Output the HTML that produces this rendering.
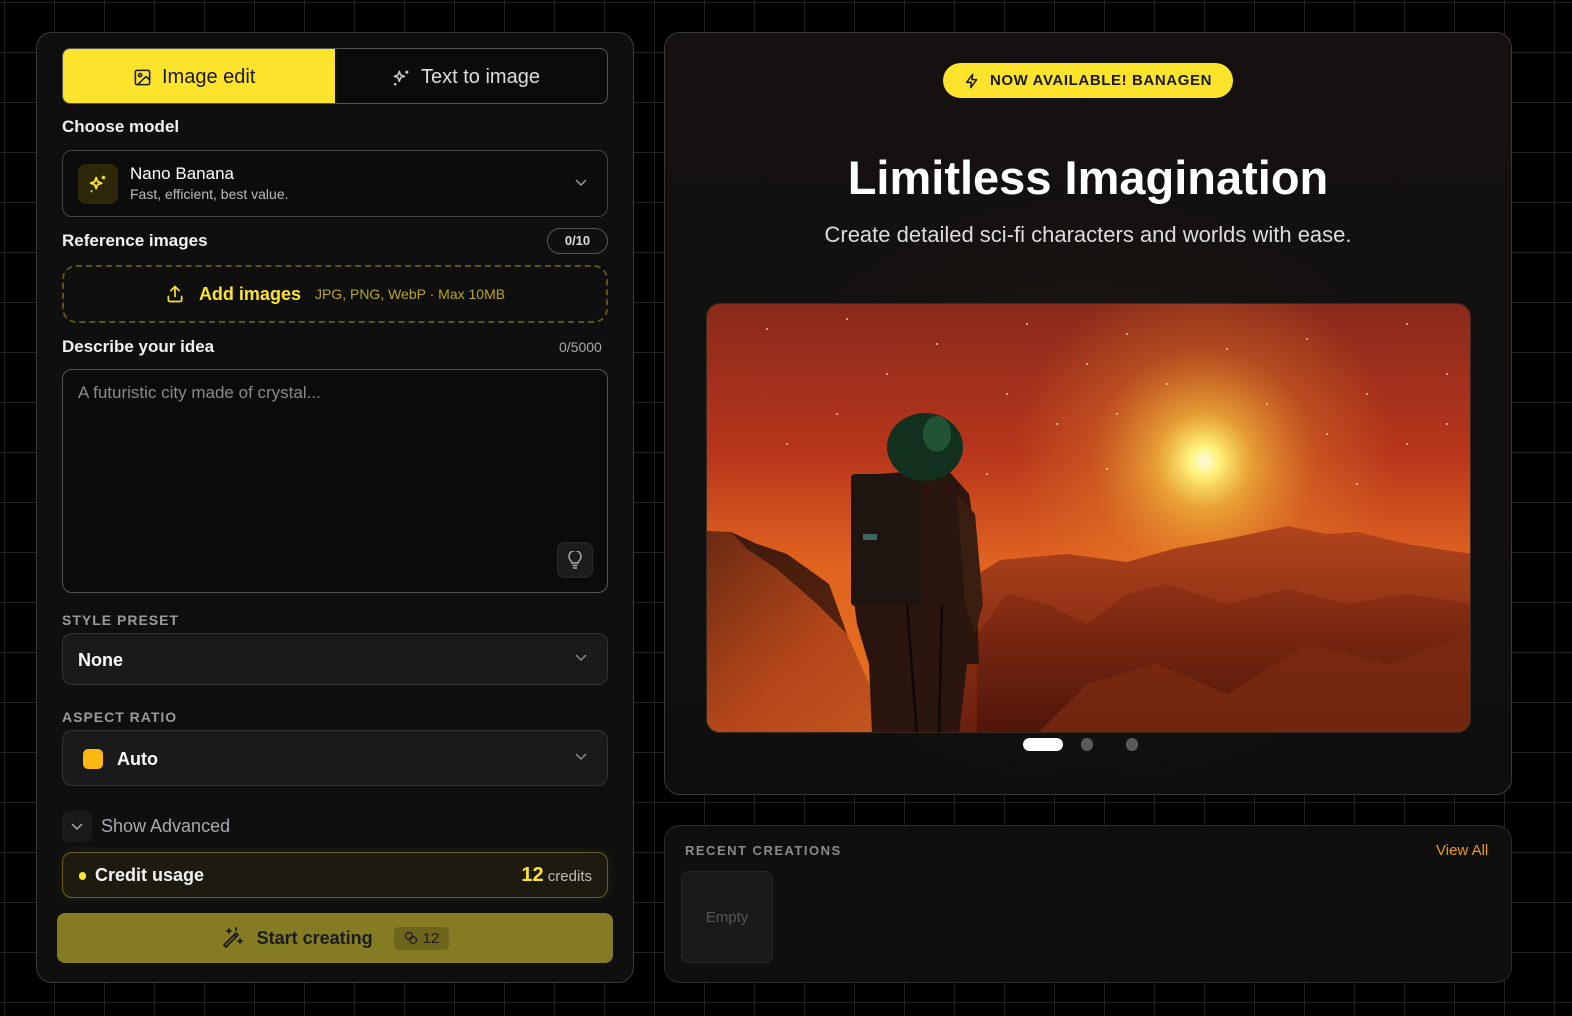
<!DOCTYPE html>
<html><head><meta charset="utf-8">
<style>
*{box-sizing:border-box;margin:0;padding:0}
html,body{width:1572px;height:1016px;overflow:hidden}
body{background-color:#000;background-image:linear-gradient(to right,#222 1px,transparent 1px),linear-gradient(to bottom,#222 1px,transparent 1px);background-size:50px 50px;background-position:4px 2px;font-family:"Liberation Sans",sans-serif;color:#fff;position:relative}
.a{position:absolute}
.panel{background:#0f0f0f;border:1px solid #3a3a3a;border-radius:16px}
.lbl{font-size:17px;font-weight:bold;color:#f2f2f2}
.cap{font-size:14px;font-weight:bold;color:#9a9a9a;letter-spacing:1px}
.sel{background:#1a1a1a;border:1px solid #333;border-radius:10px}
.chev{position:absolute;right:20px;top:50%;margin-top:-5px}
</style></head><body>

<div class="a panel" style="left:36px;top:32px;width:598px;height:951px"></div>
<div class="a" style="left:62px;top:48px;width:546px;height:56px;border:1px solid #555;border-radius:8px;background:#0b0b0b;overflow:hidden">
  <div class="a" style="left:0;top:0;width:272px;height:56px;background:#fde42c"></div>
  <div class="a" style="left:70px;top:17px;display:flex;align-items:center;gap:10px;color:#1a1a1a;font-size:20px">
    <svg width="19" height="19" viewBox="0 0 24 24" fill="none" stroke="#1a1a1a" stroke-width="2" stroke-linecap="round" stroke-linejoin="round"><rect x="3" y="3" width="18" height="18" rx="2"/><circle cx="9" cy="9" r="2"/><path d="M21 15l-3.1-3.1a2 2 0 0 0-2.8 0L6 21"/></svg>
    <span>Image edit</span></div>
  <div class="a" style="left:328px;top:17px;display:flex;align-items:center;gap:10px;color:#ddd;font-size:20px">
    <svg width="20" height="20" viewBox="0 0 24 24" fill="none" stroke="#ccc" stroke-width="1.8" stroke-linejoin="round"><path d="M10 4l1.6 4.4L16 10l-4.4 1.6L10 16l-1.6-4.4L4 10l4.4-1.6z"/><path d="M19 3v4M17 5h4M5 18v3M3.5 19.5h3"/></svg>
    <span>Text to image</span></div>
</div>

<div class="a lbl" style="left:62px;top:117px">Choose model</div>
<div class="a" style="left:62px;top:150px;width:546px;height:67px;border:1px solid #444;border-radius:10px;background:#0c0c0c">
  <div class="a" style="left:15px;top:13px;width:40px;height:40px;border-radius:8px;background:#2b2708;display:flex;align-items:center;justify-content:center">
    <svg width="22" height="22" viewBox="0 0 24 24" fill="none" stroke="#fde42c" stroke-width="2" stroke-linejoin="round"><path d="M10 5l1.6 4.4L16 11l-4.4 1.6L10 17l-1.6-4.4L4 11l4.4-1.6z"/><path d="M18 3v4M16 5h4M5 19v2"/></svg></div>
  <div class="a" style="left:67px;top:13px;font-size:17px;color:#fff">Nano Banana</div>
  <div class="a" style="left:67px;top:35px;font-size:14px;color:#bbb">Fast, efficient, best value.</div>
  <svg class="chev" width="12" height="8" viewBox="0 0 12 8"><path d="M1 1l5 5 5-5" fill="none" stroke="#999" stroke-width="1.5"/></svg>
</div>

<div class="a lbl" style="left:62px;top:231px">Reference images</div>
<div class="a" style="left:547px;top:228px;width:61px;height:26px;border:1px solid #555;border-radius:13px;font-size:13px;font-weight:bold;color:#ddd;text-align:center;line-height:24px">0/10</div>
<div class="a" style="left:62px;top:265px;width:546px;height:58px;border:2px dashed #5e5416;border-radius:14px;display:flex;align-items:center;justify-content:center;gap:0">
  <svg width="20" height="20" viewBox="0 0 24 24" fill="none" stroke="#fde42c" stroke-width="2" stroke-linecap="round" stroke-linejoin="round"><path d="M12 15V3M7 8l5-5 5 5M4 15v4a2 2 0 0 0 2 2h12a2 2 0 0 0 2-2v-4"/></svg>
  <span style="color:#fde42c;font-size:18px;font-weight:bold;margin-left:14px">Add images</span>
  <span style="color:#b9a51f;font-size:14px;margin-left:14px">JPG, PNG, WebP · Max 10MB</span>
</div>

<div class="a lbl" style="left:62px;top:337px">Describe your idea</div>
<div class="a" style="left:559px;top:339px;font-size:14px;color:#aaa">0/5000</div>
<div class="a" style="left:62px;top:369px;width:546px;height:224px;border:1px solid #555;border-radius:10px;background:#0b0b0b">
  <div class="a" style="left:15px;top:13px;font-size:17px;color:#8a8a8a">A futuristic city made of crystal...</div>
  <div class="a" style="left:494px;top:172px;width:36px;height:36px;border-radius:8px;background:#1c1c1c;border:1px solid #2a2a2a;display:flex;align-items:center;justify-content:center">
    <svg width="16" height="18" viewBox="0 0 16 18" fill="none" stroke="#aaa" stroke-width="1.5"><path d="M5 12c0-2-3-3-3-6.5a6 6 0 0 1 12 0C14 9 11 10 11 12z"/><path d="M5.5 14.5h5M6 17h4"/></svg></div>
</div>

<div class="a cap" style="left:62px;top:612px">STYLE PRESET</div>
<div class="a sel" style="left:62px;top:633px;width:546px;height:52px">
  <div class="a" style="left:15px;top:16px;font-size:18px;font-weight:bold;color:#fff">None</div>
  <svg class="chev" width="12" height="8" viewBox="0 0 12 8"><path d="M1 1l5 5 5-5" fill="none" stroke="#888" stroke-width="1.5"/></svg>
</div>
<div class="a cap" style="left:62px;top:709px">ASPECT RATIO</div>
<div class="a sel" style="left:62px;top:730px;width:546px;height:56px">
  <div class="a" style="left:20px;top:18px;width:20px;height:20px;border-radius:5px;background:#fbb812"></div>
  <div class="a" style="left:54px;top:18px;font-size:18px;font-weight:bold;color:#fff">Auto</div>
  <svg class="chev" width="12" height="8" viewBox="0 0 12 8"><path d="M1 1l5 5 5-5" fill="none" stroke="#888" stroke-width="1.5"/></svg>
</div>

<div class="a" style="left:62px;top:811px;width:30px;height:31px;border-radius:5px;background:#1a1a1a;display:flex;align-items:center;justify-content:center">
  <svg width="12" height="8" viewBox="0 0 12 8"><path d="M1 1l5 5 5-5" fill="none" stroke="#aaa" stroke-width="1.5"/></svg></div>
<div class="a" style="left:101px;top:816px;font-size:18px;color:#a9a9b0">Show Advanced</div>

<div class="a" style="left:62px;top:852px;width:546px;height:46px;border:1px solid #6b5f15;border-radius:10px;background:#1d1b0f;box-shadow:0 0 12px rgba(253,228,44,.08)">
  <div class="a" style="left:16px;top:19px;width:7px;height:8px;border-radius:4px;background:#fde42c"></div>
  <div class="a" style="left:32px;top:12px;font-size:18px;font-weight:bold;color:#f2f2f2">Credit usage</div>
  <div class="a" style="right:15px;top:11px;font-size:15px;color:#bbb"><b style="color:#fde42c;font-size:20px">12</b> credits</div>
</div>

<div class="a" style="left:57px;top:913px;width:556px;height:50px;border-radius:8px;background:#857b23;display:flex;align-items:center;justify-content:center">
  <svg width="24" height="24" viewBox="0 0 24 24" fill="none" stroke="#1a1a1a" stroke-width="1.8" stroke-linecap="round" stroke-linejoin="round"><path d="M3 21l12-12 2 2L5 23z" transform="translate(0,-2)"/><path d="M13 11l2 2" transform="translate(0,-2)"/><path d="M8 3v4M6 5h4M19 13v4M17 15h4M15 2v2"/></svg>
  <span style="margin-left:12px;font-size:18px;font-weight:bold;color:#1c1c1c">Start creating</span>
  <span style="margin-left:21px;background:#6d651c;border-radius:5px;padding:3px 10px;font-size:15px;color:#1f1f1f;display:flex;align-items:center;gap:5px">
    <svg width="14" height="14" viewBox="0 0 14 14" fill="none" stroke="#1f1f1f" stroke-width="1.3"><circle cx="5" cy="5" r="3.5"/><circle cx="9" cy="9" r="3.5"/></svg>12</span>
</div>

<div class="a" style="left:664px;top:32px;width:848px;height:763px;border:1px solid #3a3a3a;border-radius:16px;background:radial-gradient(ellipse 60% 55% at 50% 60%,#221a0e 0%,rgba(20,16,12,0) 70%),linear-gradient(#141110,#121010 60%,#0f0f0f)"></div>
<div class="a" style="left:943px;top:63px;width:290px;height:35px;border-radius:18px;background:#fde42c;display:flex;align-items:center;justify-content:center;gap:10px">
  <svg width="16" height="18" viewBox="0 0 24 24" fill="none" stroke="#1a1a1a" stroke-width="2.2" stroke-linejoin="round"><path d="M13 2L4 14h7l-1 8 9-12h-7z"/></svg>
  <span style="font-size:15px;font-weight:bold;color:#1a1a1a;letter-spacing:.6px">NOW AVAILABLE! BANAGEN</span></div>
<div class="a" style="left:664px;width:848px;top:150px;text-align:center;font-size:47px;font-weight:bold;color:#fff">Limitless Imagination</div>
<div class="a" style="left:664px;width:848px;top:222px;text-align:center;font-size:22px;color:#ddd">Create detailed sci-fi characters and worlds with ease.</div>

<div class="a" style="left:706px;top:303px;width:765px;height:430px;border-radius:14px;overflow:hidden;border:1px solid #3a2a20">
<svg width="765" height="430" viewBox="0 0 765 430">
<defs>
<linearGradient id="sky" x1="0" y1="0" x2="0" y2="1"><stop offset="0" stop-color="#8a2a1c"/><stop offset=".35" stop-color="#b8361c"/><stop offset=".6" stop-color="#e06320"/><stop offset="1" stop-color="#e8741e"/></linearGradient>
<radialGradient id="sun" cx="497" cy="157" r="190" gradientUnits="userSpaceOnUse"><stop offset="0" stop-color="#fffbe0"/><stop offset=".08" stop-color="#fff27a"/><stop offset=".25" stop-color="#f2b83a" stop-opacity=".8"/><stop offset=".6" stop-color="#e88a2a" stop-opacity=".3"/><stop offset="1" stop-color="#e88a2a" stop-opacity="0"/></radialGradient>
<linearGradient id="mt" x1="0" y1="0" x2="0" y2="1"><stop offset="0" stop-color="#b0441c"/><stop offset="1" stop-color="#6a1e0e"/></linearGradient>
<linearGradient id="mt2" x1="0" y1="0" x2="0" y2="1"><stop offset="0" stop-color="#8c2e14"/><stop offset="1" stop-color="#4a1408"/></linearGradient>
<linearGradient id="rock" x1="0" y1="0" x2="1" y2="1"><stop offset="0" stop-color="#6a2a12"/><stop offset=".5" stop-color="#b2461a"/><stop offset="1" stop-color="#c85a20"/></linearGradient>
</defs>
<rect width="765" height="430" fill="url(#sky)"/>
<rect width="765" height="430" fill="url(#sun)"/>
<g fill="#ffe7c0" opacity=".8">
<circle cx="60" cy="25" r="1"/><circle cx="140" cy="15" r="1"/><circle cx="230" cy="40" r="1"/><circle cx="320" cy="20" r="1"/><circle cx="380" cy="60" r="1"/><circle cx="420" cy="30" r="1"/><circle cx="460" cy="80" r="1"/><circle cx="520" cy="45" r="1"/><circle cx="600" cy="35" r="1"/><circle cx="660" cy="90" r="1"/><circle cx="700" cy="20" r="1"/><circle cx="740" cy="70" r="1"/><circle cx="300" cy="90" r="1"/><circle cx="350" cy="120" r="1"/><circle cx="410" cy="110" r="1"/><circle cx="130" cy="110" r="1"/><circle cx="80" cy="140" r="1"/><circle cx="250" cy="130" r="1"/><circle cx="620" cy="130" r="1"/><circle cx="700" cy="140" r="1"/><circle cx="560" cy="100" r="1"/><circle cx="180" cy="70" r="1"/><circle cx="280" cy="170" r="1"/><circle cx="400" cy="165" r="1"/><circle cx="650" cy="180" r="1"/><circle cx="740" cy="120" r="1"/>
</g>
<path d="M240 290 L293 256 L360 250 L420 258 L470 244 L520 235 L581 222 L620 230 L650 228 L700 240 L765 250 L765 430 L240 430Z" fill="url(#mt)"/>
<path d="M270 330 L300 290 L340 300 L380 320 L420 290 L460 280 L520 300 L580 285 L640 300 L700 290 L765 300 L765 430 L270 430Z" fill="url(#mt2)" opacity=".85"/>
<path d="M330 430 L380 380 L450 360 L520 390 L600 340 L680 360 L765 330 L765 430Z" fill="#7a2a10" opacity=".8"/>
<path d="M0 227 L24 228 L50 240 L80 250 L122 280 L140 330 L161 377 L175 410 L230 430 L0 430Z" fill="url(#rock)"/>
<path d="M24 228 L50 240 L80 250 L122 280 L140 330 L110 300 L70 265 L40 245Z" fill="#2a120a" opacity=".7"/>
<g>
<path d="M170 170 L240 165 L262 190 L268 230 L270 300 L272 360 L260 360 L252 430 L165 430 L162 360 L150 320 L146 290 L150 220Z" fill="#2a160e"/>
<rect x="144" y="170" width="70" height="132" rx="4" fill="#1e1410"/>
<rect x="156" y="230" width="14" height="6" fill="#4a8a7a" opacity=".7"/>
<path d="M250 190 L268 210 L276 300 L268 330 L258 300Z" fill="#3a1e12"/>
<ellipse cx="218" cy="143" rx="38" ry="34" fill="#12301e"/>
<ellipse cx="230" cy="130" rx="14" ry="18" fill="#2f6a44" opacity=".6"/>
<path d="M200 300 L210 430 M235 300 L232 430" stroke="#120a06" stroke-width="3"/>
</g>
</svg></div>

<div class="a" style="left:1023px;top:738px;width:40px;height:13px;border-radius:7px;background:#fff"></div>
<div class="a" style="left:1081px;top:738px;width:12px;height:13px;border-radius:6px;background:#5a5a5a"></div>
<div class="a" style="left:1126px;top:738px;width:12px;height:13px;border-radius:6px;background:#5a5a5a"></div>

<div class="a panel" style="left:664px;top:825px;width:848px;height:158px;background:#0f0f0f;border-color:#2c2c2c"></div>
<div class="a" style="left:685px;top:843px;font-size:13px;font-weight:bold;color:#8a8a90;letter-spacing:1.5px">RECENT CREATIONS</div>
<div class="a" style="left:1436px;top:842px;font-size:15px;color:#f09a12">View All</div>
<div class="a" style="left:681px;top:871px;width:92px;height:92px;border-radius:8px;background:#1a1a1a;border:1px solid #262626;display:flex;align-items:center;justify-content:center;font-size:15px;color:#555">Empty</div>
</body></html>
